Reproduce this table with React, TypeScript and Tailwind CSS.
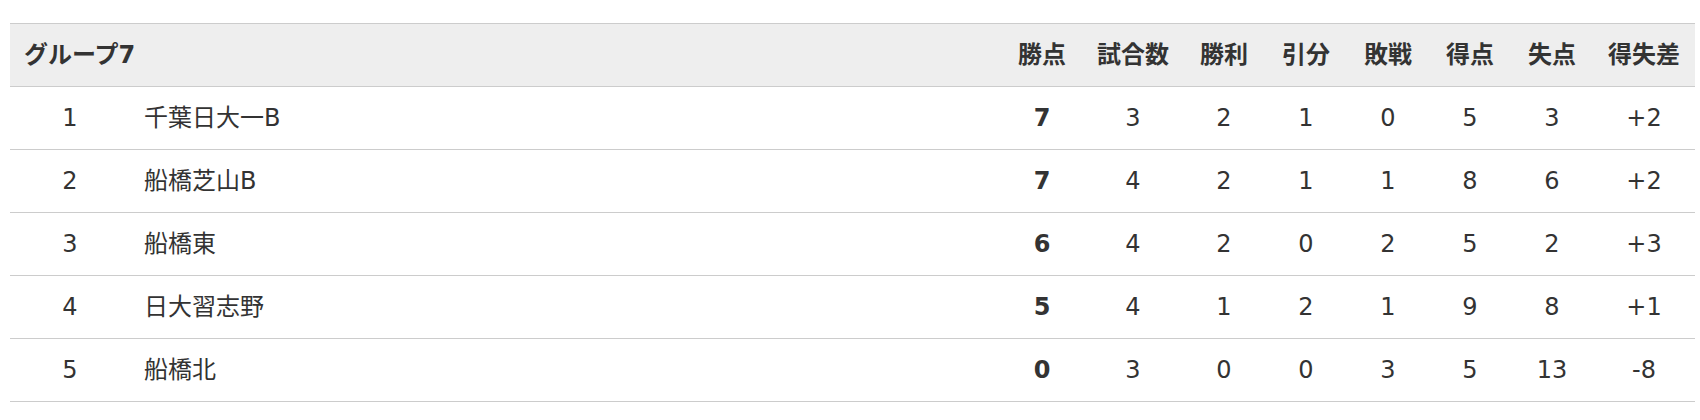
import React from 'react';

const headers = ['勝点', '試合数', '勝利', '引分', '敗戦', '得点', '失点', '得失差'];

const rows = [
  { rank: 1, name: '千葉日大一B', pts: 7, stats: ['3', '2', '1', '0', '5', '3', '+2'] },
  { rank: 2, name: '船橋芝山B', pts: 7, stats: ['4', '2', '1', '1', '8', '6', '+2'] },
  { rank: 3, name: '船橋東', pts: 6, stats: ['4', '2', '0', '2', '5', '2', '+3'] },
  { rank: 4, name: '日大習志野', pts: 5, stats: ['4', '1', '2', '1', '9', '8', '+1'] },
  { rank: 5, name: '船橋北', pts: 0, stats: ['3', '0', '0', '3', '5', '13', '-8'] },
];

const cols = 'grid grid-cols-[120px_871px_82px_100px_82px_82px_82px_82px_82px_1fr]';

export default function App() {
  return (
    <div className="min-h-[420px] bg-white pt-[23px] pl-[10px] font-['DejaVu_Sans','Noto_Sans_CJK_JP',sans-serif] text-[24px] text-[#333]">
      <div className="w-[1685px] border-t border-[#ccc]">
        {/* Header */}
        <div className={`${cols} h-[63px] items-center border-b border-[#ccc] bg-[#eeeeee] font-bold`}>
          <div className="col-span-2 pl-[14px]">グループ7</div>
          {headers.map((h) => (
            <div key={h} className="text-center">{h}</div>
          ))}
        </div>

        {/* Rows */}
        {rows.map((r) => (
          <div key={r.rank} className={`${cols} h-[63px] items-center border-b border-[#ccc]`}>
            <div className="text-center">{r.rank}</div>
            <div className="pl-[14px]">{r.name}</div>
            <div className="text-center font-bold">{r.pts}</div>
            {r.stats.map((s, i) => (
              <div key={i} className="text-center">{s}</div>
            ))}
          </div>
        ))}
      </div>
    </div>
  );
}
